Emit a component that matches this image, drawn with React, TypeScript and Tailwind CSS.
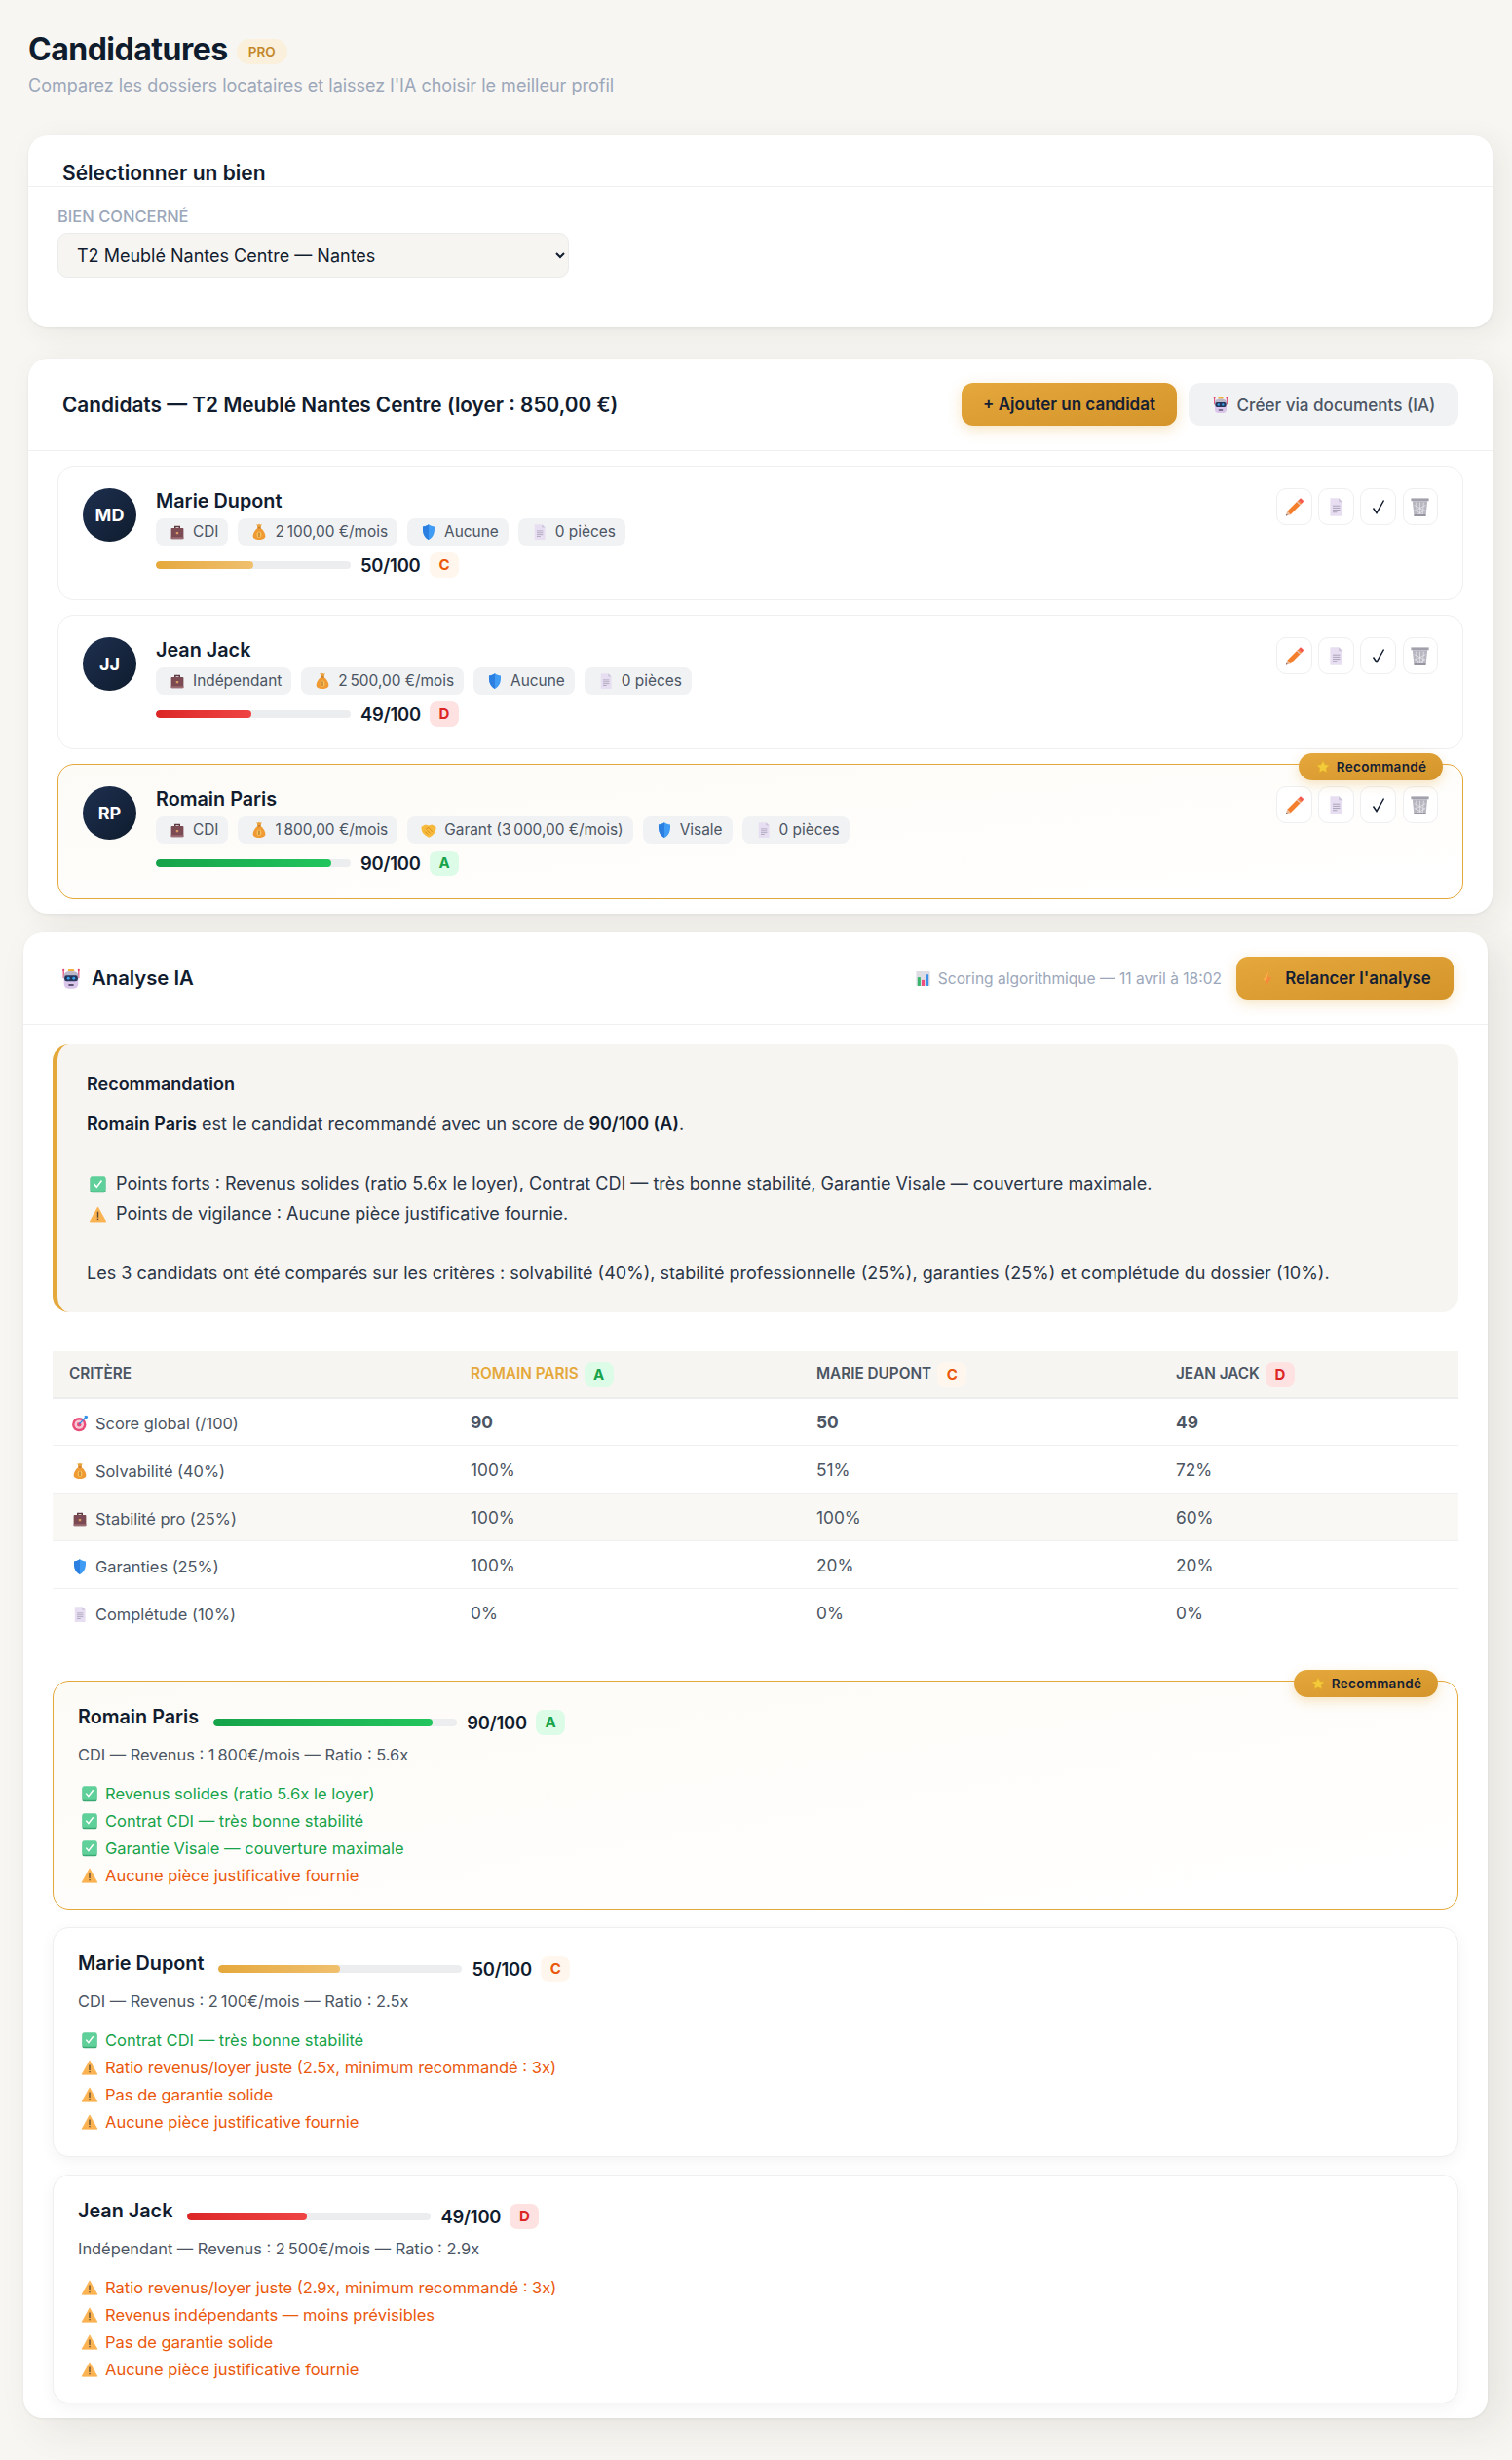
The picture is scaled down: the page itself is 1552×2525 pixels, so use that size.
import React from "react";

type IconProps = { className?: string };
const Svg = ({ className = "size-[18px]", children }: IconProps & { children: React.ReactNode }) => (
  <svg viewBox="0 0 24 24" className={`${className} inline-block shrink-0`} aria-hidden="true">{children}</svg>
);
const Briefcase = (p: IconProps) => (
  <Svg {...p}>
    <path d="M9 7V4.500h6V7" fill="none" stroke="#5f3a42" strokeWidth="2" />
    <rect x="3.500" y="6.500" width="17" height="15" rx="1.200" fill="#7c4a53" />
    <rect x="3.500" y="19" width="17" height="2.500" fill="#9b6b72" />
    <rect x="10.400" y="12" width="3.200" height="3" fill="#d79a63" />
  </Svg>
);
const Money = (p: IconProps) => (
  <Svg {...p}>
    <path d="M8.500 1l1.800 1.200L12 1l1.700 1.200L15.500 1 14 6.500h-4z" fill="#e9a03a" />
    <path d="M10 6.500h4c4 3 6.500 7.500 6.500 11 0 3.300-3.900 5-8.500 5s-8.500-1.700-8.500-5c0-3.500 2.500-8 6.500-11z" fill="#ef9a33" />
    <rect x="10" y="5.700" width="4" height="1.500" fill="#b8702a" />
    <ellipse cx="12" cy="15.500" rx="3.200" ry="4.300" fill="#f8c25c" />
    <path d="M12 12.500v6" stroke="#a8641f" strokeWidth="1.400" />
  </Svg>
);
const Shield = (p: IconProps) => (
  <Svg {...p}>
    <path d="M12 1.500c2.800 1.800 5 2.700 8 3 .4 9-1.500 14.500-8 18-6.500-3.500-8.400-9-8-18 3-.3 5.200-1.200 8-3z" fill="#3f9bf3" />
    <path d="M12 1.500v21c-6.500-3.500-8.400-9-8-18 3-.3 5.200-1.200 8-3z" fill="#2a7fe0" />
  </Svg>
);
const Doc = (p: IconProps) => (
  <Svg {...p}>
    <path d="M5 1.500h10l4.500 4.500v16.500H5z" fill="#e7dff1" />
    <path d="M15 1.500L19.500 6H15z" fill="#cdc4da" />
    <path d="M8 10.500h8.500M8 13h8.500M8 15.500h8.500M8 18h5" stroke="#a9a0b8" strokeWidth="1.100" />
  </Svg>
);
const Hands = (p: IconProps) => (
  <Svg {...p}>
    <path d="M2 7.500l5.500-3 4.500 1.500 4.500-1.500 5.500 3c.300 5.500-1.500 9-4.500 11.500l-3.500 2.500c-1 .500-2 .500-3 0L7 19C4 16.500 1.700 13 2 7.500z" fill="#f6b93b" />
    <path d="M8 11l4-2.500 5 6M7 14l4 4M10 12.500l4 4" stroke="#d68b1e" strokeWidth="1.200" fill="none" />
  </Svg>
);
const Robot = (p: IconProps) => (
  <Svg {...p}>
    <path d="M3.500 2v9M20.500 2v9" stroke="#e0446f" strokeWidth="1.300" />
    <circle cx="3.500" cy="2" r="1.200" fill="#e0446f" />
    <circle cx="20.500" cy="2" r="1.200" fill="#e0446f" />
    <rect x="8.500" y="1" width="7" height="2.800" rx="1" fill="#f2b33d" />
    <rect x="4" y="3.500" width="16" height="19" rx="5" fill="#d9c6ea" />
    <path d="M4 8.500C4 5 7 3.500 12 3.500s8 1.500 8 5V12H4z" fill="#b9b7c9" />
    <rect x="4.500" y="8" width="15" height="6.500" rx="2.500" fill="#26365a" />
    <circle cx="9" cy="11.200" r="1.600" fill="#39a0e8" />
    <circle cx="15" cy="11.200" r="1.600" fill="#39a0e8" />
    <rect x="9" y="17.500" width="6" height="2" rx=".8" fill="#5d5474" />
  </Svg>
);
const Pencil = (p: IconProps) => (
  <Svg {...p}>
    <path d="M16.500 4.500l3.500 3.500L8 20l-3.500-3.500z" fill="#f47f2d" />
    <path d="M16.500 4.500L18 3c.500-.500 1.200-.500 1.700 0l1.800 1.800c.500.500.500 1.200 0 1.700L20 8z" fill="#f4574b" />
    <path d="M15.500 5.500l3.500 3.500-1 1-3.500-3.500z" fill="#e6c7c0" />
    <path d="M4.500 16.500L8 20l-5 1.500z" fill="#e9b795" />
    <path d="M3.600 19.500l1.400 1.400-2 .6z" fill="#6b5a66" />
  </Svg>
);
const Trash = (p: IconProps) => (
  <Svg {...p}>
    <rect x="2.500" y="2.500" width="19" height="3" fill="#a2a1ab" />
    <path d="M4 5.500h16L18.300 21.500H5.700z" fill="#b7b6c0" />
    <path d="M8 7l1 13M12 7v13M16 7l-1 13M6 10l11 6M18 10L7 16M6 15l9 5M18 15l-9 5" stroke="#e6e5ea" strokeWidth=".8" />
    <rect x="5.700" y="20" width="12.600" height="1.800" fill="#8f8e99" />
  </Svg>
);
const Tick = () => (
  <svg viewBox="0 0 14 16" className="h-[16px] w-[14px]" aria-hidden="true">
    <path d="M1.500 9.500L5 14.500 12.500 1.500" fill="none" stroke="#111c2e" strokeWidth="1.500" />
  </svg>
);
const Star = (p: IconProps) => (
  <Svg {...p}>
    <path d="M12 2.500l2.900 6.100 6.600.9-4.800 4.600 1.200 6.600L12 17.600l-5.900 3.100 1.200-6.600L2.500 9.500l6.600-.9z" fill="#f4cb3a" stroke="#e3ab2c" strokeWidth="1" strokeLinejoin="round" />
  </Svg>
);
const Bolt = (p: IconProps) => (
  <Svg {...p}>
    <path d="M14 1L6 13.500h4.500L9 23l9-13.500h-5z" fill="#f58a3c" />
    <path d="M14 1L6 13.500h4.500z" fill="#f9b24a" />
  </Svg>
);
const Chart = (p: IconProps) => (
  <Svg {...p}>
    <rect x="2" y="1.500" width="20" height="21" rx="1" fill="#dedde6" />
    <rect x="4" y="10" width="4.300" height="12.500" fill="#38b56a" />
    <rect x="9.900" y="14" width="4.300" height="8.500" fill="#ef4d7d" />
    <rect x="15.700" y="6" width="4.300" height="16.500" fill="#3a8fe8" />
  </Svg>
);
const Target = (p: IconProps) => (
  <Svg {...p}>
    <circle cx="11" cy="13.500" r="9.500" fill="#e84d78" />
    <circle cx="11" cy="13.500" r="6.300" fill="#f7c9d6" />
    <circle cx="11" cy="13.500" r="3" fill="#e84d78" />
    <path d="M11 13.500L20 3" stroke="#2f8fe8" strokeWidth="1.600" />
    <path d="M18 2l1 2.500 2.500 1L23 3l-1-1.500L20 1z" fill="#2f8fe8" />
  </Svg>
);
const CheckBox = (p: IconProps) => (
  <Svg {...p}>
    <rect x="2" y="2.500" width="20" height="20.500" rx="2.500" fill="#3ba873" />
    <rect x="2" y="1.500" width="20" height="19.500" rx="2.500" fill="#5fd09a" />
    <path d="M7 11.500l3.500 4L17 7" fill="none" stroke="#fff" strokeWidth="2" />
  </Svg>
);
const Warn = (p: IconProps) => (
  <Svg {...p}>
    <path d="M12 2.500L22.500 21.500h-21z" fill="#fbb250" strokeLinejoin="round" stroke="#fbb250" />
    <path d="M12 8.500v7.500" stroke="#5d4a36" strokeWidth="1.800" />
    <rect x="11.100" y="17.300" width="1.800" height="1.800" fill="#5d4a36" />
  </Svg>
);

const NN = "\u202f";

const Grade = ({ g }: { g: "A" | "C" | "D" }) => {
  const cls =
    g === "A"
      ? "bg-[#dcfce7] text-[#16a34a]"
      : g === "C"
        ? "bg-[#fff7ed] text-[#ea580c]"
        : "bg-[#fee2e2] text-[#dc2626]";
  return (
    <span className={`inline-flex h-[26px] w-[30px] shrink-0 items-center justify-center rounded-[8px] text-[15px] font-bold ${cls}`}>
      {g}
    </span>
  );
};

const barCls = {
  A: "bg-gradient-to-r from-[#16a34a] to-[#22c55e]",
  C: "bg-gradient-to-r from-[#e5a83b] to-[#f0c06e]",
  D: "bg-gradient-to-r from-[#dc2626] to-[#ef4444]",
};

const ScoreRow = ({ score, g, barW }: { score: number; g: "A" | "C" | "D"; barW: string }) => (
  <div className="flex h-[26px] items-center gap-[10px]">
    <div className={`h-[8px] overflow-hidden rounded-full bg-[#ecedef] ${barW}`}>
      <div className={`h-full rounded-full ${barCls[g]}`} style={{ width: `${score}%` }} />
    </div>
    <span className="w-[61px] text-[18.400px] leading-[26px] font-semibold tracking-[-0.2px] whitespace-nowrap text-[#111c2e]">{score}/100</span>
    <Grade g={g} />
  </div>
);

const Chip = ({ icon, text }: { icon: React.ReactNode; text: string }) => (
  <span className="flex h-[28px] items-center gap-[7px] rounded-[8px] bg-[#f1f2f4] pr-[10px] pl-[13px] text-[15.400px] whitespace-nowrap text-[#4b5563]">
    {icon}
    {text}
  </span>
);

const Actions = () => (
  <div className="flex shrink-0 gap-[6.500px]">
    <button className="flex h-[38px] w-[37px] items-center justify-center rounded-[10px] border border-[#eeeff1] bg-white">
      <Pencil className="size-[23px]" />
    </button>
    <button className="flex h-[38px] w-[36.500px] items-center justify-center rounded-[10px] border border-[#eeeff1] bg-white">
      <Doc className="size-[21px]" />
    </button>
    <button className="flex h-[38px] w-[37px] items-center justify-center rounded-[10px] border border-[#eeeff1] bg-white">
      <Tick />
    </button>
    <button className="flex h-[38px] w-[36.500px] items-center justify-center rounded-[10px] border border-[#eeeff1] bg-white">
      <Trash className="size-[23px]" />
    </button>
  </div>
);

const RecBadge = () => (
  <span className="absolute top-[-12px] right-[20px] flex h-[28px] w-[148px] items-center justify-center gap-[6px] rounded-full bg-gradient-to-br from-[#e5a83b] to-[#d4942a] text-[13.500px] font-semibold tracking-[0.3px] text-[#152033] shadow-[0_4px_12px_rgba(229,168,59,0.3)]">
    <Star className="size-[16px]" />
    Recommandé
  </span>
);

type Cand = {
  initials: string;
  name: string;
  score: number;
  g: "A" | "C" | "D";
  chips: [string, string][];
  best?: boolean;
};

const iconFor = (k: string) => {
  const c = "size-[18px]";
  if (k === "job") return <Briefcase className={c} />;
  if (k === "money") return <Money className={c} />;
  if (k === "hands") return <Hands className={c} />;
  if (k === "shield") return <Shield className={c} />;
  return <Doc className={c} />;
};

const candidates: Cand[] = [
  {
    initials: "MD",
    name: "Marie Dupont",
    score: 50,
    g: "C",
    chips: [["job", "CDI"], ["money", `2${NN}100,00 €/mois`], ["shield", "Aucune"], ["doc", "0 pièces"]],
  },
  {
    initials: "JJ",
    name: "Jean Jack",
    score: 49,
    g: "D",
    chips: [["job", "Indépendant"], ["money", `2${NN}500,00 €/mois`], ["shield", "Aucune"], ["doc", "0 pièces"]],
  },
  {
    initials: "RP",
    name: "Romain Paris",
    score: 90,
    g: "A",
    best: true,
    chips: [
      ["job", "CDI"],
      ["money", `1${NN}800,00 €/mois`],
      ["hands", `Garant (3${NN}000,00 €/mois)`],
      ["shield", "Visale"],
      ["doc", "0 pièces"],
    ],
  },
];

const CandidateCard = ({ c }: { c: Cand }) => (
  <div
    className={`relative flex gap-[20px] rounded-[17px] border px-[25px] pt-[22px] pb-[22px] ${
      c.best ? "min-h-[139px] border-[#e5a83b] bg-gradient-to-br from-[#fdfbf6] to-white" : "border-[#eeeff1] bg-white"
    }`}
  >
    {c.best && <RecBadge />}
    <div className="flex size-[55px] shrink-0 items-center justify-center rounded-full bg-gradient-to-br from-[#1e3050] to-[#0f1c2e] text-[18px] font-bold text-white">
      {c.initials}
    </div>
    <div className="flex-1">
      <div className="mb-[5px] h-[26px] text-[19.800px] leading-[26px] font-semibold text-[#111c2e]">{c.name}</div>
      <div className="mb-[7px] flex gap-[10px]">
        {c.chips.map(([k, t]) => (
          <Chip key={k + t} icon={iconFor(k)} text={t} />
        ))}
      </div>
      <ScoreRow score={c.score} g={c.g} barW="w-[200px]" />
    </div>
    <Actions />
  </div>
);

const rows: { icon: React.ReactNode; label: string; v: [string, string, string]; bold?: boolean; shade?: boolean }[] = [
  { icon: <Target className="size-[18px]" />, label: "Score global (/100)", v: ["90", "50", "49"], bold: true },
  { icon: <Money className="size-[18px]" />, label: "Solvabilité (40%)", v: ["100%", "51%", "72%"] },
  { icon: <Briefcase className="size-[18px]" />, label: "Stabilité pro (25%)", v: ["100%", "100%", "60%"], shade: true },
  { icon: <Shield className="size-[18px]" />, label: "Garanties (25%)", v: ["100%", "20%", "20%"] },
  { icon: <Doc className="size-[18px]" />, label: "Complétude (10%)", v: ["0%", "0%", "0%"] },
];

type Analysis = {
  name: string;
  score: number;
  g: "A" | "C" | "D";
  detail: string;
  good: string[];
  bad: string[];
  best?: boolean;
};

const analyses: Analysis[] = [
  {
    name: "Romain Paris",
    score: 90,
    g: "A",
    best: true,
    detail: `CDI — Revenus : 1${NN}800€/mois — Ratio : 5.6x`,
    good: ["Revenus solides (ratio 5.6x le loyer)", "Contrat CDI — très bonne stabilité", "Garantie Visale — couverture maximale"],
    bad: ["Aucune pièce justificative fournie"],
  },
  {
    name: "Marie Dupont",
    score: 50,
    g: "C",
    detail: `CDI — Revenus : 2${NN}100€/mois — Ratio : 2.5x`,
    good: ["Contrat CDI — très bonne stabilité"],
    bad: ["Ratio revenus/loyer juste (2.5x, minimum recommandé : 3x)", "Pas de garantie solide", "Aucune pièce justificative fournie"],
  },
  {
    name: "Jean Jack",
    score: 49,
    g: "D",
    detail: `Indépendant — Revenus : 2${NN}500€/mois — Ratio : 2.9x`,
    good: [],
    bad: [
      "Ratio revenus/loyer juste (2.9x, minimum recommandé : 3x)",
      "Revenus indépendants — moins prévisibles",
      "Pas de garantie solide",
      "Aucune pièce justificative fournie",
    ],
  },
];

const AnalysisCard = ({ a }: { a: Analysis }) => (
  <div
    className={`relative rounded-[17px] border px-[25px] pt-[23px] pb-[20.500px] ${
      a.best
        ? "border-[#e5a83b] bg-gradient-to-br from-[#fdfbf6] to-white"
        : "border-[#eeeff1] bg-white shadow-[0_4px_16px_rgba(0,0,0,0.05)]"
    }`}
  >
    {a.best && <RecBadge />}
    <div className="flex h-[32px] items-start gap-[15px]">
      <span className="text-[19.800px] leading-[26px] font-semibold text-[#111c2e]">{a.name}</span>
      <div className="mt-[6px]">
        <ScoreRow score={a.score} g={a.g} barW="w-[250px]" />
      </div>
    </div>
    <div className="mt-[8px] mb-[14px] text-[16.400px] leading-[24px] text-[#4b5563]">{a.detail}</div>
    {a.good.map((t) => (
      <div key={t} className="flex h-[28px] items-center gap-[7px] pl-[3px] text-[16.500px] text-[#16a34a]">
        <CheckBox className="size-[18px]" />
        {t}
      </div>
    ))}
    {a.bad.map((t) => (
      <div key={t} className="flex h-[28px] items-center gap-[7px] pl-[3px] text-[16.500px] text-[#ea580c]">
        <Warn className="size-[18px]" />
        {t}
      </div>
    ))}
  </div>
);

const cardCls =
  "rounded-[20px] bg-white shadow-[8px_6px_30px_rgba(40,40,30,0.07),0_1px_3px_rgba(0,0,0,0.06)]";

export default function App() {
  return (
    <div className="min-h-[2525px] bg-[#f7f6f2] pt-[35px] pr-[20px] pb-[40px] pl-[29px] font-['Inter',sans-serif] text-[#111c2e]">
      <div className="flex h-[32px] items-center gap-[9px]">
        <h1 className="text-[32px] leading-[32px] font-bold tracking-[-0.5px] text-[#0f1c2e]">Candidatures</h1>
        <span className="mt-[4px] flex h-[26px] w-[52px] items-center justify-center rounded-full bg-[#faf0dc] text-[13.500px] font-semibold text-[#c4882a]">
          PRO
        </span>
      </div>
      <p className="mt-[9px] mb-[39px] text-[18px] leading-[24px] text-[#9ca7ba]">
        Comparez les dossiers locataires et laissez l'IA choisir le meilleur profil
      </p>

      <section className={`${cardCls} mb-[32px] h-[197px]`}>
        <div className="h-[53px] border-b border-[#f0f0f2] pt-[27px] pl-[35px] text-[21px] leading-[24px] font-semibold text-[#111c2e]">
          Sélectionner un bien
        </div>
        <div className="pt-[21px] pl-[30px]">
          <label className="mb-[7px] block text-[16.500px] leading-[19px] font-medium text-[#9ca7ba] uppercase">Bien concerné</label>
          <select
            defaultValue="t2"
            className="h-[46px] w-[525px] rounded-[10px] border border-[#ebebeb] bg-[#f7f5f2] pl-[15px] text-[18px] text-[#111c2e]"
          >
            <option value="t2">T2 Meublé Nantes Centre — Nantes</option>
          </select>
        </div>
      </section>

      <section className={`${cardCls} mb-[19px]`}>
        <div className="flex h-[95px] items-center justify-between border-b border-[#f0f0f2] pr-[35px] pl-[35px]">
          <h2 className="pt-[2px] text-[20.800px] font-semibold text-[#111c2e]">Candidats — T2 Meublé Nantes Centre (loyer : 850,00 €)</h2>
          <div className="flex gap-[12px]">
            <button className="h-[44px] w-[221px] rounded-[12px] bg-gradient-to-br from-[#e5a83b] to-[#d4942a] pt-[1px] text-[17px] font-semibold text-[#152033] shadow-[0_4px_14px_rgba(229,168,59,0.3)]">
              + Ajouter un candidat
            </button>
            <button className="flex h-[44px] w-[277px] items-center justify-center gap-[8px] rounded-[12px] bg-[#f1f2f4] pt-[1px] text-[17.100px] font-medium text-[#4b5563]">
              <Robot className="size-[18px]" />
              Créer via documents (IA)
            </button>
          </div>
        </div>
        <div className="flex flex-col gap-[15px] px-[30px] py-[15px]">
          {candidates.map((c) => (
            <CandidateCard key={c.name} c={c} />
          ))}
        </div>
      </section>

      <section className="mr-[5px] -ml-[5px] rounded-[20px] bg-white pb-[15px] shadow-[16px_10px_44px_rgba(40,40,30,0.09),0_1px_3px_rgba(0,0,0,0.06)]">
        <div className="flex h-[95px] items-center justify-between border-b border-[#f0f0f2] pr-[35px] pl-[38px]">
          <h2 className="flex items-center gap-[10px] pt-[1px] text-[20.300px] font-semibold text-[#111c2e]">
            <Robot className="size-[22px]" />
            Analyse IA
          </h2>
          <div className="flex items-center gap-[15px]">
            <span className="flex items-center gap-[7px] pt-[1px] text-[15.560px] text-[#9ca7ba]">
              <Chart className="size-[17px]" />
              Scoring algorithmique — 11 avril à 18:02
            </span>
            <button className="flex h-[44px] w-[223px] items-center justify-center gap-[9px] rounded-[12px] bg-gradient-to-br from-[#e5a83b] to-[#d4942a] pt-[1px] text-[16.900px] font-semibold text-[#152033] shadow-[0_4px_14px_rgba(229,168,59,0.3)]">
              <Bolt className="size-[18px]" />
              Relancer l'analyse
            </button>
          </div>
        </div>

        <div className="px-[30px] pt-[20px]">
          <div className="rounded-[17px] border-l-[5px] border-[#e5a83b] bg-[#f7f5f2] pt-[25px] pb-[24.400px] pl-[30px]">
            <div className="mb-[10px] text-[18px] leading-[32px] font-semibold text-[#152033]">Recommandation</div>
            <div className="text-[18px] leading-[30.600px] text-[#2b3647]">
              <div>
                <strong className="font-semibold text-[#111c2e]">Romain Paris</strong> est le candidat recommandé avec un score de{" "}
                <strong className="font-semibold text-[#111c2e]">90/100 (A)</strong>.
              </div>
              <div className="h-[30.600px]" />
              <div className="flex items-center gap-[9px] pl-[2px]">
                <CheckBox className="size-[19px]" />
                Points forts : Revenus solides (ratio 5.6x le loyer), Contrat CDI — très bonne stabilité, Garantie Visale — couverture maximale.
              </div>
              <div className="flex items-center gap-[9px] pl-[2px]">
                <Warn className="size-[19px]" />
                Points de vigilance : Aucune pièce justificative fournie.
              </div>
              <div className="h-[30.600px]" />
              <div>
                Les 3 candidats ont été comparés sur les critères : solvabilité (40%), stabilité professionnelle (25%), garanties (25%) et complétude du dossier (10%).
              </div>
            </div>
          </div>

          <table className="mt-[40px] w-full table-fixed border-collapse">
            <thead>
              <tr className="h-[48px] border-b-2 border-[#ededed] bg-[#f7f5f2] text-left text-[15.300px] font-semibold text-[#4b5563] uppercase">
                <th className="w-[412px] pt-[1px] pl-[17px] font-semibold">Critère</th>
                <th className="w-[355px] pt-[1px] pl-[17px] font-semibold text-[#e5a83b]">
                  <span className="flex items-center gap-[6px]">Romain Paris <Grade g="A" /></span>
                </th>
                <th className="w-[369px] pt-[1px] pl-[17px] font-semibold">
                  <span className="flex items-center gap-[6px]">Marie Dupont <Grade g="C" /></span>
                </th>
                <th className="pt-[1px] pl-[17px] font-semibold">
                  <span className="flex items-center gap-[6px]">Jean Jack <Grade g="D" /></span>
                </th>
              </tr>
            </thead>
            <tbody>
              {rows.map((r, i) => (
                <tr key={r.label} className={`h-[49px] text-[#4b5563] ${i < rows.length - 1 ? "border-b border-[#f0f0f2]" : ""} ${r.shade ? "bg-[#f9f8f5]" : ""}`}>
                  <td className="pl-[19px] text-[16.400px]">
                    <span className="flex items-center gap-[7px] pt-[3px]">{r.icon}{r.label}</span>
                  </td>
                  {r.v.map((v, j) => (
                    <td key={j} className={`pt-[1px] pl-[17px] text-[17.300px] ${r.bold ? "font-bold" : ""}`}>{v}</td>
                  ))}
                </tr>
              ))}
            </tbody>
          </table>

          <div className="mt-[45px] flex flex-col gap-[18px]">
            {analyses.map((a) => (
              <AnalysisCard key={a.name} a={a} />
            ))}
          </div>
        </div>
      </section>
    </div>
  );
}
